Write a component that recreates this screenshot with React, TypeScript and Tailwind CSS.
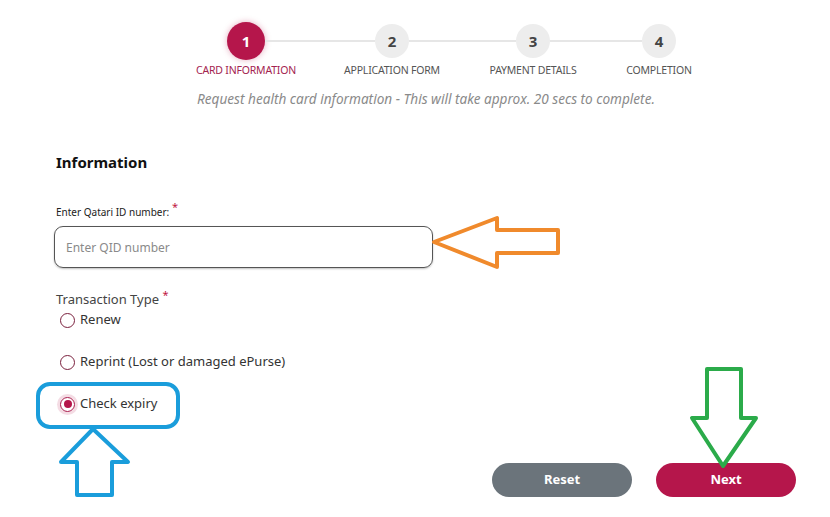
import React from 'react';

const steps = [
  { n: 1, label: 'CARD INFORMATION' },
  { n: 2, label: 'APPLICATION FORM' },
  { n: 3, label: 'PAYMENT DETAILS' },
  { n: 4, label: 'COMPLETION' },
];

const Radio = ({ label, checked }: { label: string; checked?: boolean }) => (
  <label className="flex items-center gap-[5px] h-[20px] pl-[4px] text-[13px] text-[#333] cursor-pointer">
    <span
      className={
        checked
          ? 'w-[15px] h-[15px] rounded-full border-[1.5px] border-[#a8184a] flex items-center justify-center shadow-[0_0_0_3px_rgba(181,22,75,0.15)]'
          : 'w-[15px] h-[15px] rounded-full border-[1.5px] border-[#7a1f3d]'
      }
    >
      {checked && <span className="w-[8px] h-[8px] rounded-full bg-[#b5164b]" />}
    </span>
    <span>{label}</span>
  </label>
);

export default function App() {
  return (
    <div className="relative w-[830px] h-[517px] bg-white overflow-hidden font-['Noto_Sans',sans-serif]">
      {/* stepper */}
      <div className="pt-[22px] pl-[227px]">
        <div className="flex items-center">
          <div className="w-[38px] h-[38px] rounded-full bg-[#b5164b] text-white text-[15px] font-bold flex items-center justify-center shadow-[0_0_6px_rgba(181,22,75,0.35)]">
            1
          </div>
          <div className="w-[110px] h-[2px] bg-[#e6e6e6]" />
          <div className="w-[34px] h-[34px] rounded-full bg-[#ededed] text-[#444] text-[15px] font-bold flex items-center justify-center">2</div>
          <div className="w-[107px] h-[2px] bg-[#e6e6e6]" />
          <div className="w-[34px] h-[34px] rounded-full bg-[#ededed] text-[#444] text-[15px] font-bold flex items-center justify-center">3</div>
          <div className="w-[92px] h-[2px] bg-[#e6e6e6]" />
          <div className="w-[34px] h-[34px] rounded-full bg-[#ededed] text-[#444] text-[15px] font-bold flex items-center justify-center">4</div>
        </div>
        <div className="flex mt-[3px] -ml-[41px] text-[10.5px] leading-[14px] tracking-[-0.2px]">
          <div className="w-[120px] text-center text-[#a3234f]">{steps[0].label}</div>
          <div className="w-[120px] ml-[26px] text-center text-[#555]">{steps[1].label}</div>
          <div className="w-[120px] ml-[21px] text-center text-[#555]">{steps[2].label}</div>
          <div className="w-[120px] ml-[6px] text-center text-[#555]">{steps[3].label}</div>
        </div>
      </div>

      <p className="mt-[14px] pl-[197px] text-[13.6px] leading-[16px] italic text-[#8a8a8a]">
        Request health card information - This will take approx. 20 secs to complete.
      </p>

      {/* form */}
      <div className="pl-[56px]">
        <h2 className="mt-[45px] text-[15px] leading-[20px] font-bold text-[#111]">Information</h2>

        <div className="mt-[33px] text-[10px] leading-[14px] text-[#222]">
          Enter Qatari ID number: <sup className="text-[#c0163f] text-[11px]">*</sup>
        </div>
        <input
          placeholder="Enter QID number"
          className="mt-[7px] -ml-[2px] w-[379px] h-[42px] rounded-[9px] border border-[#555] px-[11px] text-[12px] text-[#333] placeholder:text-[#8a8a8a] shadow-[0_1px_2px_rgba(0,0,0,0.25)] outline-none"
        />

        <div className="mt-[22px] text-[13px] leading-[18px] text-[#444]">
          Transaction Type <sup className="text-[#c0163f] text-[11px]">*</sup>
        </div>
        <div className="mt-[2px] flex flex-col gap-[22px]">
          <Radio label="Renew" />
          <Radio label="Reprint (Lost or damaged ePurse)" />
          <Radio label="Check expiry" checked />
        </div>
      </div>

      <div className="mt-[49px] flex justify-end gap-[24px] pr-[34px]">
        <button className="w-[140px] h-[34px] rounded-full bg-[#6b747b] text-white text-[13px] font-bold">Reset</button>
        <button className="w-[140px] h-[34px] rounded-full bg-[#b5164b] text-white text-[13px] font-bold">Next</button>
      </div>

      {/* annotations */}
      <svg className="absolute inset-0 pointer-events-none" width="830" height="517" viewBox="0 0 830 517">
        <polygon
          points="434,242 497,218 497,230 558,230 558,253 497,253 497,267"
          fill="none"
          stroke="#f08a2c"
          strokeWidth="4"
          strokeLinejoin="round"
        />
        <rect x="38" y="384" width="140" height="43" rx="12" fill="none" stroke="#1a9ddb" strokeWidth="4" />
        <polygon
          points="93,429 128,462 112,462 112,495 77,495 77,462 61,462"
          fill="none"
          stroke="#1a9ddb"
          strokeWidth="4"
          strokeLinejoin="round"
        />
        <polygon
          points="707,369 741,369 741,418 756,418 723,466 692,418 707,418"
          fill="none"
          stroke="#2bab4a"
          strokeWidth="4"
          strokeLinejoin="round"
        />
      </svg>
    </div>
  );
}
